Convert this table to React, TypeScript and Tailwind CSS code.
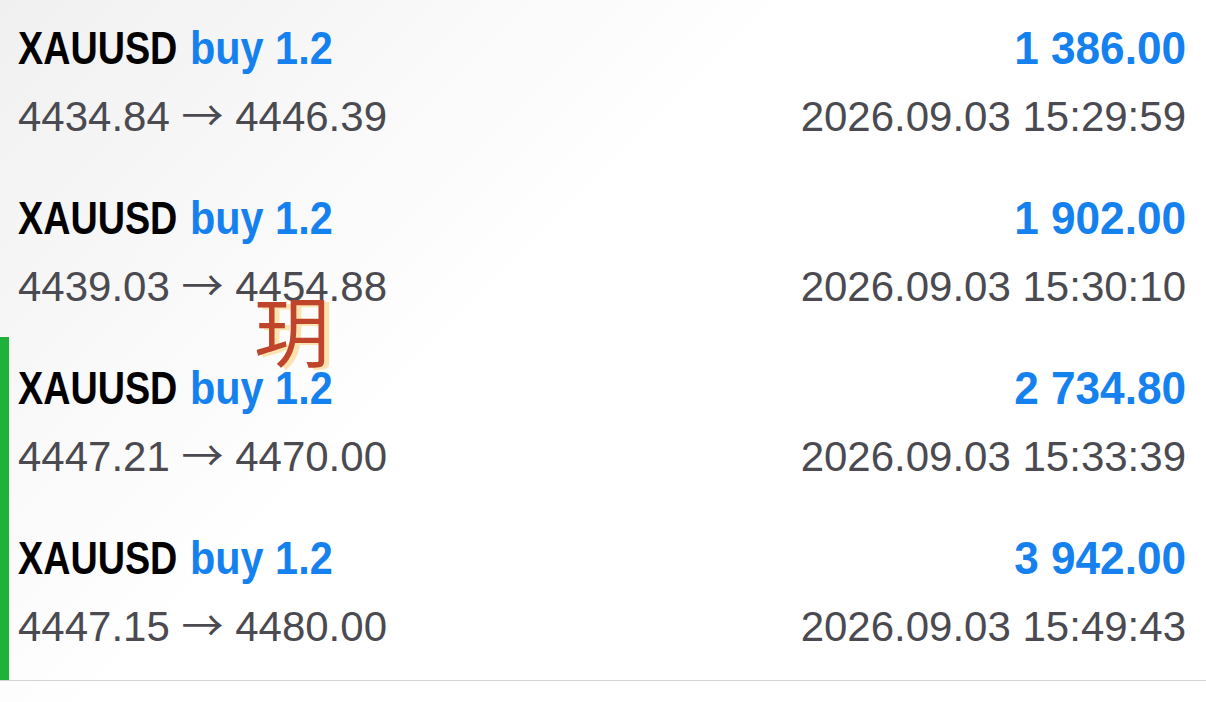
import React from "react";

const rows = [
  { a: "4434.84", b: "4446.39", profit: "1 386.00", time: "2026.09.03 15:29:59", green: false },
  { a: "4439.03", b: "4454.88", profit: "1 902.00", time: "2026.09.03 15:30:10", green: false },
  { a: "4447.21", b: "4470.00", profit: "2 734.80", time: "2026.09.03 15:33:39", green: true },
  { a: "4447.15", b: "4480.00", profit: "3 942.00", time: "2026.09.03 15:49:43", green: true },
];

const titleFont = { fontFamily: '"Liberation Sans", sans-serif' };
const bodyFont = { fontFamily: '"Liberation Sans", "Noto Sans CJK SC", sans-serif' };

export default function App() {
  return (
    <div className="relative w-[1206px] h-[702px] overflow-hidden bg-white bg-[linear-gradient(135deg,#f0f0f0_0%,#f8f8f8_22%,#ffffff_42%)]">
      <div className="flex flex-col border-b border-[#d4d4d6]">
        {rows.map((r, i) => (
          <div key={i} className="relative h-[170px] pl-[18px] pr-[20px] flex flex-col">
            {r.green && <div className="absolute left-0 top-[-3px] bottom-0 w-[9px] bg-[#1fb23a]" />}
            <div
              className="flex justify-between items-baseline h-[88px] pt-[20px] text-[46px] font-bold leading-[56px]"
              style={titleFont}
            >
              <div className="flex items-baseline">
                <div className="w-[157px] whitespace-nowrap">
                  <span className="inline-block origin-left scale-x-[0.82] text-black">XAUUSD</span>
                </div>
                <div className="ml-[15px] w-[142px] whitespace-nowrap">
                  <span className="inline-block origin-left scale-x-[0.90] text-[#1581ef]">buy 1.2</span>
                </div>
              </div>
              <div className="whitespace-nowrap">
                <span className="inline-block origin-right scale-x-[0.96] text-[#1581ef]">{r.profit}</span>
              </div>
            </div>
            <div
              className="flex justify-between items-baseline text-[#4a4a50] text-[42px] leading-[50px]"
              style={bodyFont}
            >
              <span className="whitespace-nowrap">
                {r.a}{" "}
                <span className="text-[42px]" style={{ fontFamily: '"Noto Sans CJK SC", sans-serif' }}>
                  →
                </span>{" "}
                {r.b}
              </span>
              <span className="whitespace-nowrap">{r.time}</span>
            </div>
          </div>
        ))}
      </div>
      <div
        className="absolute left-[254px] top-[290px] text-[76px] leading-none text-[#c0442a] [text-shadow:5px_2px_0_#fbe3b0]"
        style={{ fontFamily: '"Noto Sans CJK SC", sans-serif' }}
      >
        玥
      </div>
    </div>
  );
}
